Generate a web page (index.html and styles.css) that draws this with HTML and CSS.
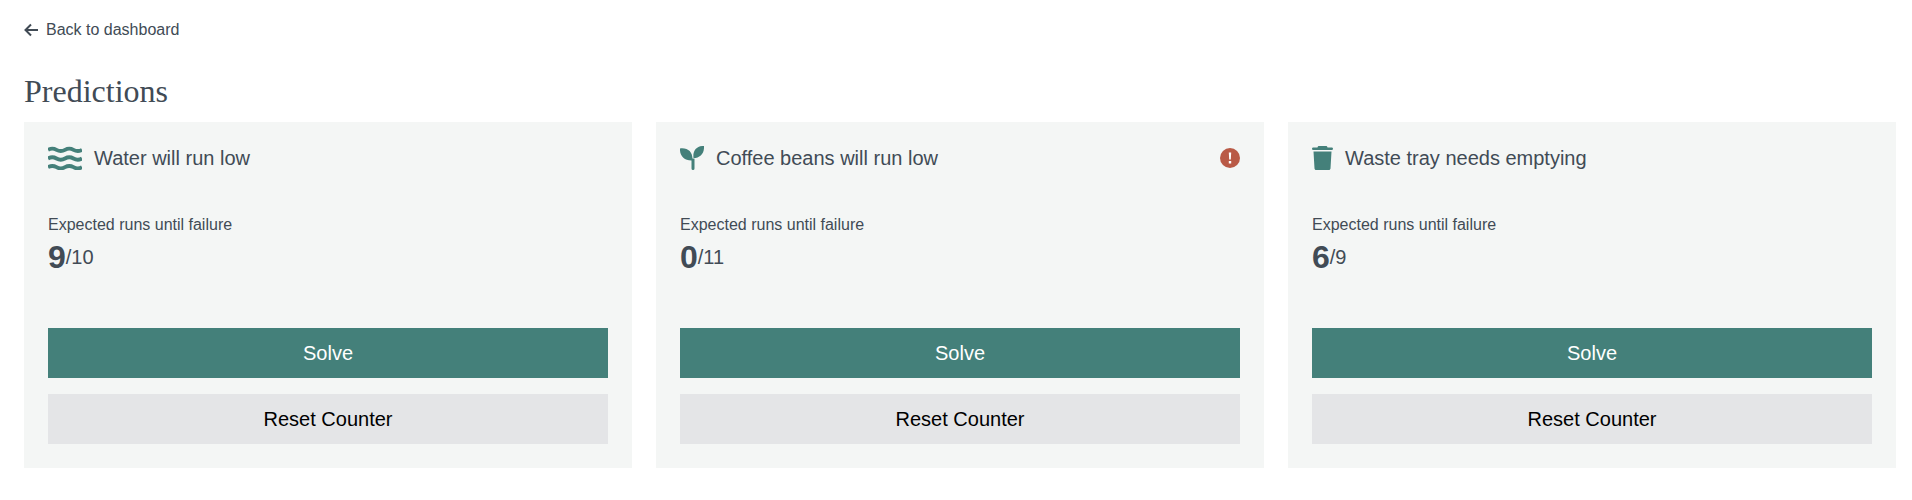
FILE: index.html
```html
<!DOCTYPE html>
<html lang="en">
<head>
<meta charset="utf-8">
<title>Predictions</title>
<link rel="stylesheet" href="styles.css">
</head>
<body>
<main class="page">
  <a class="back" href="#">
    <svg class="back-icon" viewBox="0 0 16 16" aria-hidden="true"><path d="M14 8H1.500M7 2.500L1.500 8 7 13.500" fill="none" stroke="currentColor" stroke-width="2"/></svg>
    <span>Back to dashboard</span>
  </a>
  <h1 class="title">Predictions</h1>
  <section class="cards">
    <article class="card">
      <header class="card-head">
        <svg class="icon icon-water" viewBox="0 0 34 24" aria-hidden="true"><path d="M0 3.800c2.800-1.600 5.700-1.600 8.500 0s5.700 1.600 8.500 0 5.700-1.600 8.500 0 5.700 1.600 8.500 0M0 12.500c2.800-1.600 5.700-1.600 8.500 0s5.700 1.600 8.500 0 5.700-1.600 8.500 0 5.700 1.600 8.500 0M0 21.200c2.800-1.600 5.700-1.600 8.500 0s5.700 1.600 8.500 0 5.700-1.600 8.500 0 5.700 1.600 8.500 0" fill="none" stroke="currentColor" stroke-width="3.800"/></svg>
        <h2 class="card-title">Water will run low</h2>
      </header>
      <div class="metric">
        <p class="metric-label">Expected runs until failure</p>
        <p class="metric-value"><strong>9</strong><span>/10</span></p>
      </div>
      <div class="actions">
        <button class="btn btn-primary">Solve</button>
        <button class="btn btn-secondary">Reset Counter</button>
      </div>
    </article>
    <article class="card">
      <header class="card-head">
        <svg class="icon icon-sprout" viewBox="0 0 24 24" aria-hidden="true"><path d="M0 2.500C8 1.500 13 6 12.500 14.500 4.500 15-.5 10 0 2.500zM24 0c.5 7.500-4 12-10.500 12C12.500 5 16.500-.5 24 0zM11.500 12.500h3v10a1.500 1.500 0 0 1-3 0z" fill="currentColor"/></svg>
        <h2 class="card-title">Coffee beans will run low</h2>
        <svg class="alert" viewBox="0 0 20 20" aria-hidden="true"><circle cx="10" cy="10" r="10" fill="#b95a46"/><path d="M8.800 4.500h2.400l-.4 7H9.200zM8.800 13h2.400v2.400H8.800z" fill="#fff"/></svg>
      </header>
      <div class="metric">
        <p class="metric-label">Expected runs until failure</p>
        <p class="metric-value"><strong>0</strong><span>/11</span></p>
      </div>
      <div class="actions">
        <button class="btn btn-primary">Solve</button>
        <button class="btn btn-secondary">Reset Counter</button>
      </div>
    </article>
    <article class="card">
      <header class="card-head">
        <svg class="icon icon-trash" viewBox="0 0 21 24" aria-hidden="true"><path d="M5.500 1.500C5.500.7 6.200 0 7 0h7c.8 0 1.500.7 1.500 1.500h4c.8 0 1.500.5 1.500 1.300S20.300 4 19.500 4h-18C.7 4 0 3.600 0 2.800s.7-1.300 1.500-1.300zM1.500 5.500h18l-1 17c-.1.900-.7 1.500-1.600 1.500H4.100c-.9 0-1.500-.6-1.600-1.500z" fill="currentColor"/></svg>
        <h2 class="card-title">Waste tray needs emptying</h2>
      </header>
      <div class="metric">
        <p class="metric-label">Expected runs until failure</p>
        <p class="metric-value"><strong>6</strong><span>/9</span></p>
      </div>
      <div class="actions">
        <button class="btn btn-primary">Solve</button>
        <button class="btn btn-secondary">Reset Counter</button>
      </div>
    </article>
  </section>
</main>
</body>
</html>
```
FILE: styles.css
```css
* { box-sizing: border-box; }
html, body { margin: 0; background: #fff; }
body { font-family: "Liberation Sans", Arial, sans-serif; color: #414b55; }
.page { padding: 20px 16px 32px 24px; }
.back { display: flex; align-items: center; gap: 6px; height: 20px; color: #414b55; text-decoration: none; font-size: 16px; line-height: 20px; }
.back-icon { width: 16px; height: 16px; flex: none; }
.title { margin: 33px 0 13px; font-family: "Liberation Serif", "Times New Roman", serif; font-weight: 400; font-size: 32px; line-height: 36px; color: #414b55; }
.cards { display: flex; gap: 24px; }
.card { flex: 1 1 0; height: 346px; padding: 24px; background: #f4f6f5; display: flex; flex-direction: column; }
.card-head { display: flex; align-items: center; height: 24px; }
.icon { flex: none; color: #44807a; }
.icon-water { width: 34px; height: 24px; margin-right: 12px; }
.icon-sprout { width: 24px; height: 24px; margin-right: 12px; }
.icon-trash { width: 21px; height: 24px; margin-right: 12px; }
.card-title { margin: 0; font-size: 20px; font-weight: 400; line-height: 24px; color: #414b55; }
.alert { width: 20px; height: 20px; margin-left: auto; }
.metric { margin-top: 45px; }
.metric-label { margin: 0; font-size: 16px; line-height: 20px; }
.metric-value { display: flex; align-items: center; margin: 4px 0 0; height: 36px; font-size: 20px; line-height: 24px; }
.metric-value strong { font-size: 32px; line-height: 36px; font-weight: 700; }
.actions { margin-top: auto; display: flex; flex-direction: column; gap: 16px; }
.btn { display: block; width: 100%; height: 50px; border: 0; border-radius: 0; font-family: inherit; font-size: 20px; }
.btn-primary { background: #44807a; color: #fff; }
.btn-secondary { background: #e4e5e7; color: #000; }
```
